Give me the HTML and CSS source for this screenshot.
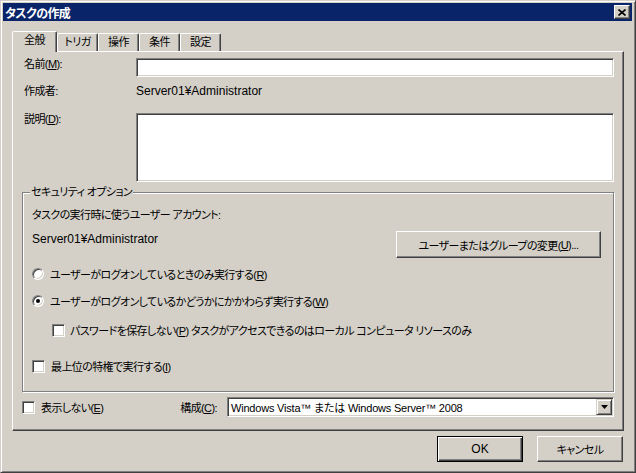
FILE: index.html
```html
<!DOCTYPE html>
<html lang="ja">
<head>
  <meta charset="UTF-8">
  <title>タスクの作成</title>
  <link rel="stylesheet" href="styles.css">
</head>
<body>
  <div class="window">
    <div class="titlebar">
      <span class="title">タスクの作成</span>
      <div class="close">
        <svg width="8" height="7" viewBox="0 0 8 7"><path d="M0.5 0.5L7.5 6.5M7.5 0.5L0.5 6.5" stroke="#000" stroke-width="1.6"/></svg>
      </div>
    </div>

    <div class="content">
      <div class="tabs">
        <div class="tab active">全般</div>
        <div class="tab">トリガ</div>
        <div class="tab">操作</div>
        <div class="tab">条件</div>
        <div class="tab">設定</div>
      </div>

      <div class="panel">
        <div class="field">
          <span class="field-label">名前(<u>M</u>):</span>
          <div class="textbox"></div>
        </div>
        <div class="field field-info">
          <span class="field-label">作成者:</span>
          <span class="latin">Server01¥Administrator</span>
        </div>
        <div class="field field-desc">
          <span class="field-label">説明(<u>D</u>):</span>
          <div class="textbox textarea"></div>
        </div>

        <div class="group">
          <div class="group-title">セキュリティ オプション</div>
          <div class="group-text">タスクの実行時に使うユーザー アカウント:</div>
          <div class="account-row">
            <span class="account latin">Server01¥Administrator</span>
            <div class="btn btn-change">ユーザーまたはグループの変更(<u>U</u>)...</div>
          </div>
          <div class="option opt-r1">
            <span class="radio"></span>
            <span>ユーザーがログオンしているときのみ実行する(<u>R</u>)</span>
          </div>
          <div class="option opt-r2">
            <span class="radio checked"></span>
            <span>ユーザーがログオンしているかどうかにかかわらず実行する(<u>W</u>)</span>
          </div>
          <div class="option opt-pass">
            <span class="check"></span>
            <span>パスワードを保存しない(<u>P</u>) タスクがアクセスできるのはローカル コンピュータ リソースのみ</span>
          </div>
          <div class="option opt-top">
            <span class="check"></span>
            <span>最上位の特権で実行する(<u>I</u>)</span>
          </div>
        </div>

        <div class="bottom-row">
          <div class="option">
            <span class="check"></span>
            <span>表示しない(<u>E</u>)</span>
          </div>
          <span class="config-label">構成(<u>C</u>):</span>
          <div class="select">
            <span class="select-text">Windows Vista™ または Windows Server™ 2008</span>
            <div class="drop">
              <svg width="7" height="4" viewBox="0 0 7 4"><path d="M0 0H7L3.5 4Z" fill="#000"/></svg>
            </div>
          </div>
        </div>
      </div>

      <div class="buttons">
        <div class="btn btn-default latin">OK</div>
        <div class="btn">キャンセル</div>
      </div>
    </div>
  </div>
</body>
</html>
```

FILE: styles.css
```css
:root {
  --face: #d4d0c8;
  --shadow: #808080;
  --dark: #404040;
  --light: #fff;
  --title: #0a246a;
}

* {
  margin: 0;
  padding: 0;
  box-sizing: border-box;
}

body {
  width: 636px;
  height: 473px;
  background: var(--face);
  font-family: "Liberation Sans", "Noto Sans CJK JP", sans-serif;
  font-size: 11px;
  letter-spacing: -0.6px;
  font-feature-settings: "palt";
  color: #000;
}

.latin {
  font-size: 12px;
  letter-spacing: 0;
}

.window {
  width: 636px;
  height: 473px;
  display: flex;
  flex-direction: column;
  background: var(--face);
  border: 1px solid;
  border-color: var(--face) var(--dark) var(--dark) var(--face);
  box-shadow: inset 1px 1px var(--light), inset -1px -1px var(--shadow);
  padding: 2px 3px 2px 2px;
}

/* title bar */
.titlebar {
  flex: none;
  height: 18px;
  display: flex;
  align-items: center;
  justify-content: space-between;
  background: var(--title);
  color: #fff;
  font-weight: bold;
  font-size: 12px;
  padding: 0 2px 0 2px;
}

.close {
  width: 16px;
  height: 14px;
  display: flex;
  align-items: center;
  justify-content: center;
  background: var(--face);
  border: 1px solid;
  border-color: var(--light) var(--dark) var(--dark) var(--light);
  box-shadow: inset -1px -1px var(--shadow);
}

.content {
  flex: 1;
  display: flex;
  flex-direction: column;
  padding: 10px 8px 0 9px;
}

/* tabs */
.tabs {
  display: flex;
  align-items: flex-end;
  height: 20px;
}

.tab {
  width: 41px;
  height: 18px;
  line-height: 16px;
  text-align: center;
  border: 1px solid;
  border-bottom: 0;
  border-color: var(--light) var(--dark) transparent var(--light);
  border-radius: 2px 2px 0 0;
  box-shadow: inset -1px 0 var(--shadow);
}

.tab.active {
  position: relative;
  z-index: 1;
  width: 45px;
  height: 21px;
  margin-bottom: -1px;
  line-height: 17px;
  background: var(--face);
}

.panel {
  height: 380px;
  display: flex;
  flex-direction: column;
  border: 1px solid;
  border-color: var(--light) var(--dark) var(--dark) var(--light);
  box-shadow: inset -1px -1px var(--shadow);
  padding: 6px 9px 0 9px;
}

/* fields */
.field {
  display: flex;
  align-items: flex-start;
}

.field-label {
  flex: none;
  width: 114px;
  padding-left: 2px;
  line-height: 12px;
}

.field-info {
  margin-top: 6px;
  line-height: 16px;
}

.field-info .field-label {
  line-height: 16px;
}

.field-desc {
  margin-top: 14px;
}

.textbox {
  flex: 1;
  height: 19px;
  background: #fff;
  border: 1px solid;
  border-color: var(--shadow) var(--light) var(--light) var(--shadow);
  box-shadow: inset 1px 1px var(--dark), inset -1px -1px var(--face);
}

.textarea {
  height: 69px;
}

/* security group */
.group {
  margin-top: 10px;
  border: 1px solid var(--shadow);
  box-shadow: inset 1px 1px var(--light), 1px 1px var(--light);
  padding: 0 12px 18px 9px;
}

.group-title {
  width: max-content;
  margin: -8px 0 0 -2px;
  padding: 0 1px;
  line-height: 14px;
  background: var(--face);
}

.group-text {
  margin-top: 9px;
  line-height: 14px;
}

.account-row {
  margin-top: 9px;
  display: flex;
  justify-content: space-between;
  align-items: flex-start;
}

.account {
  margin-top: 1px;
  line-height: 14px;
}

.btn {
  width: 86px;
  height: 26px;
  display: flex;
  align-items: center;
  justify-content: center;
  background: var(--face);
  border: 1px solid;
  border-color: var(--light) var(--dark) var(--dark) var(--light);
  box-shadow: inset -1px -1px var(--shadow);
}

.btn-change {
  width: 205px;
  height: 27px;
}

.btn-default {
  border-color: #000;
  box-shadow: inset 1px 1px var(--light), inset -1px -1px var(--dark), inset -2px -2px var(--shadow);
}

.option {
  display: flex;
  align-items: center;
  height: 14px;
  gap: 6px;
}

.opt-r1 { margin-top: 9px; }
.opt-r2 { margin-top: 13px; }
.opt-pass { margin-top: 15px; padding-left: 20px; gap: 5px; }
.opt-top { margin-top: 22px; }

.radio {
  flex: none;
  width: 12px;
  height: 12px;
  border-radius: 50%;
  background: #fff;
  border: 1px solid;
  border-color: var(--shadow) var(--light) var(--light) var(--shadow);
  box-shadow: inset 1px 1px var(--dark), inset -1px -1px var(--face);
  display: flex;
  align-items: center;
  justify-content: center;
}

.radio.checked::after {
  content: "";
  width: 4px;
  height: 4px;
  border-radius: 50%;
  background: #000;
}

.check {
  flex: none;
  width: 13px;
  height: 13px;
  background: #fff;
  border: 1px solid;
  border-color: var(--shadow) var(--light) var(--light) var(--shadow);
  box-shadow: inset 1px 1px var(--dark), inset -1px -1px var(--face);
}

/* bottom row */
.bottom-row {
  margin-top: 5px;
  height: 20px;
  display: flex;
  align-items: center;
}

.config-label {
  margin-left: auto;
  margin-right: 10px;
}

.select {
  width: 387px;
  height: 20px;
  display: flex;
  align-items: center;
  justify-content: space-between;
  background: #fff;
  border: 1px solid;
  border-color: var(--shadow) var(--light) var(--light) var(--shadow);
  box-shadow: inset 1px 1px var(--dark), inset -1px -1px var(--face);
  padding: 1px 1px 1px 3px;
  letter-spacing: -0.2px;
}

.drop {
  width: 16px;
  height: 16px;
  display: flex;
  align-items: center;
  justify-content: center;
  background: var(--face);
  border: 1px solid;
  border-color: var(--face) var(--dark) var(--dark) var(--face);
  box-shadow: inset 1px 1px var(--light), inset -1px -1px var(--shadow);
}

.buttons {
  margin-top: 5px;
  padding-right: 1px;
  display: flex;
  justify-content: flex-end;
  gap: 14px;
}
```
